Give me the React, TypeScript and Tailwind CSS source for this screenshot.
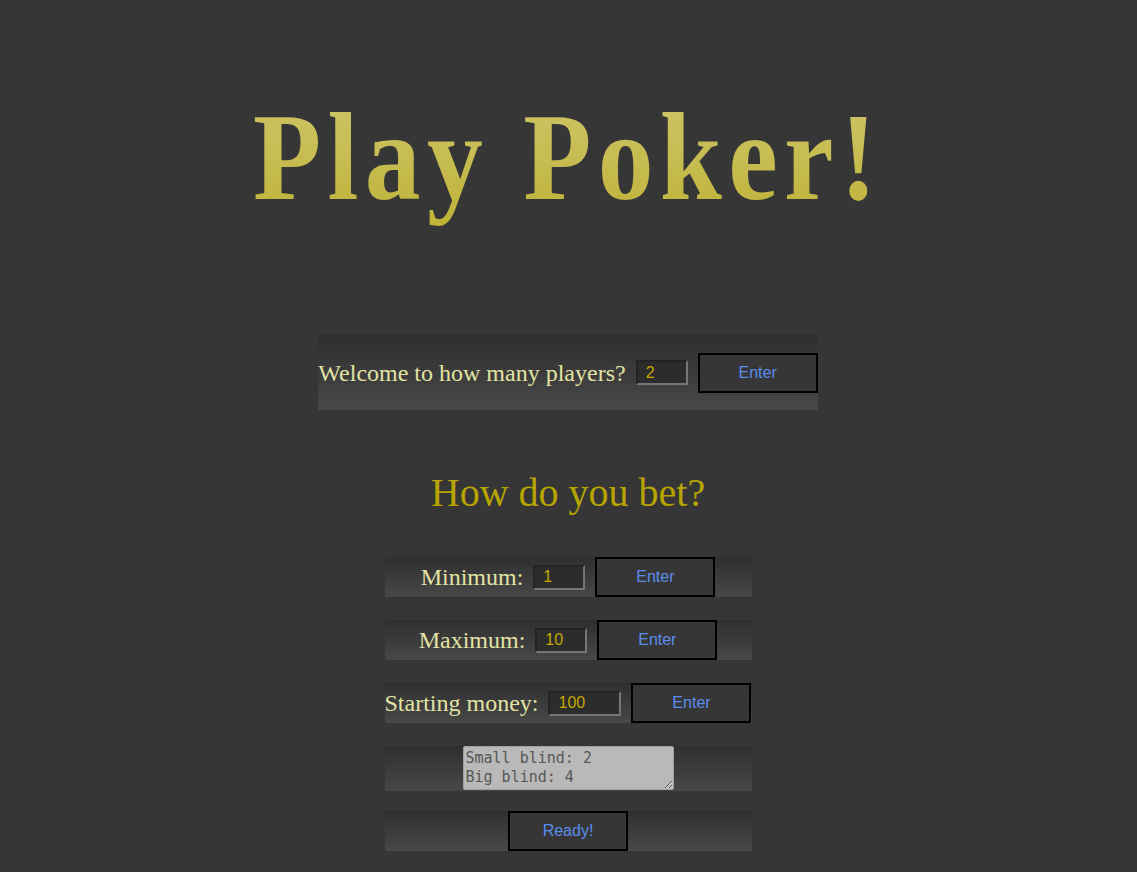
import React from "react";

const rowBg = "bg-gradient-to-b from-[#2f2f2f] to-[#484848]";
const serif = "font-['Liberation_Serif',serif]";

function EnterButton({ label = "Enter" }: { label?: string }) {
  return (
    <button className="w-[120px] h-[40px] border-2 border-black bg-[#363636] text-[#5b8ded] text-[16px] font-['Liberation_Sans',Arial,sans-serif] shrink-0">
      {label}
    </button>
  );
}

function NumInput({ value, width = "w-[52px]" }: { value: string; width?: string }) {
  return (
    <input
      defaultValue={value}
      className={`${width} h-[25px] bg-[#2c2c2c] border-2 border-t-[#232323] border-l-[#232323] border-b-[#767676] border-r-[#767676] text-[#c4a800] text-[16px] pl-[8px] font-['Liberation_Sans',Arial,sans-serif] outline-none shrink-0`}
    />
  );
}

export default function App() {
  return (
    <div className="min-h-[872px] w-full bg-[#363636]">
      <div className="w-[1136px] flex flex-col items-center">
        <h1
          className={`mt-[96px] pb-[24px] text-[124px] leading-none font-bold ${serif} tracking-[7px] scale-x-[0.9] bg-gradient-to-b from-[#cdc566] to-[#bdb02c] bg-clip-text text-transparent`}
        >
          Play Poker!
        </h1>

        <div className={`mt-[91px] h-[75px] flex items-center ${rowBg}`}>
          <span className={`${serif} text-[24px] text-[#e3e3a4]`}>Welcome to how many players?</span>
          <div className="ml-[10px]">
            <NumInput value="2" />
          </div>
          <div className="ml-[10px]">
            <EnterButton />
          </div>
        </div>

        <h2 className={`mt-[63px] ${serif} text-[40px] leading-none text-[#b7a400]`}>How do you bet?</h2>

        <div className="mt-[44px] w-[367px] flex flex-col">
          <div className={`h-[40px] flex items-center justify-center ${rowBg}`}>
            <span className={`${serif} text-[24px] text-[#e3e3a4]`}>Minimum:</span>
            <div className="ml-[10px]">
              <NumInput value="1" />
            </div>
            <div className="ml-[10px]">
              <EnterButton />
            </div>
          </div>

          <div className={`mt-[23px] h-[40px] flex items-center justify-center ${rowBg}`}>
            <span className={`${serif} text-[24px] text-[#e3e3a4]`}>Maximum:</span>
            <div className="ml-[10px]">
              <NumInput value="10" />
            </div>
            <div className="ml-[10px]">
              <EnterButton />
            </div>
          </div>

          <div className={`mt-[23px] h-[40px] flex items-center justify-center ${rowBg}`}>
            <span className={`${serif} text-[24px] text-[#e3e3a4] whitespace-nowrap`}>Starting money:</span>
            <div className="ml-[10px]">
              <NumInput value="100" width="w-[73px]" />
            </div>
            <div className="ml-[10px]">
              <EnterButton />
            </div>
          </div>

          <div className={`mt-[23px] h-[45px] flex items-start justify-center ${rowBg}`}>
            <textarea
              readOnly
              rows={2}
              defaultValue={"Small blind: 2\nBig blind: 4"}
              className="w-[211px] h-[44px] bg-[#b9b9b9] rounded-[2px] border border-[#a0a0a0] px-[2px] pt-[2px] text-[15px] leading-[19px] text-[#575757] font-['DejaVu_Sans_Mono',monospace] outline-none overflow-hidden"
            />
          </div>

          <div className={`mt-[20px] h-[40px] flex items-center justify-center ${rowBg}`}>
            <EnterButton label="Ready!" />
          </div>
        </div>
      </div>
    </div>
  );
}
